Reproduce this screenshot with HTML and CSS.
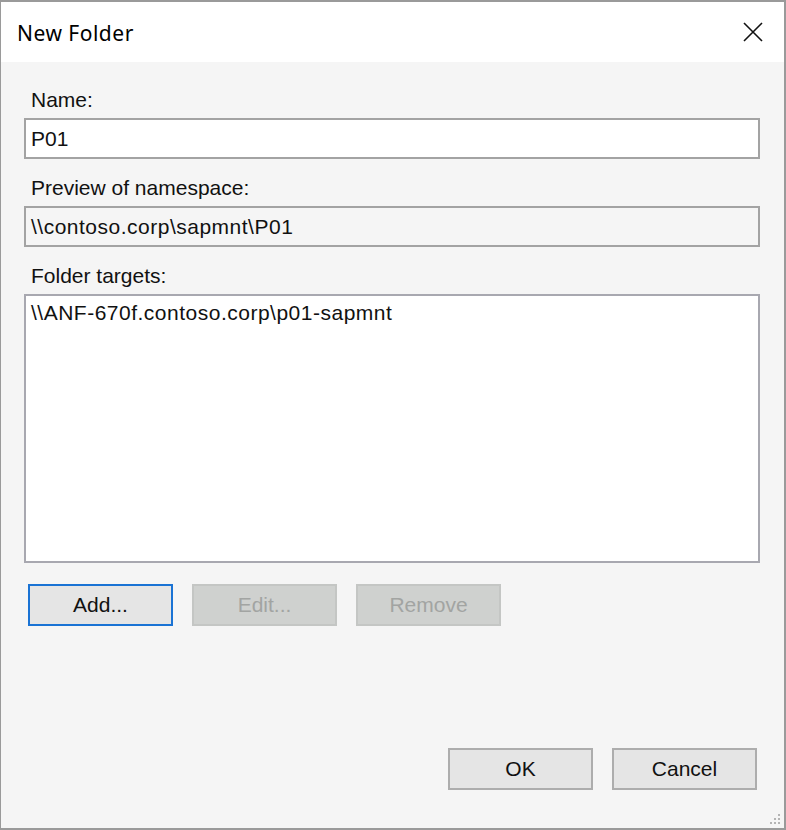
FILE: index.html
```html
<!DOCTYPE html>
<html>
<head>
<meta charset="utf-8">
<link rel="stylesheet" href="styles.css">
</head>
<body>
<div class="window">
  <div class="titlebar">
    <span class="title">New Folder</span>
    <svg class="close" width="20" height="20" viewBox="0 0 20 20"><path d="M1 1L19 19M19 1L1 19" stroke="#111" stroke-width="1.6" fill="none"/></svg>
  </div>
  <div class="content">
    <div class="label">Name:</div>
    <div class="field input">P01</div>
    <div class="label">Preview of namespace:</div>
    <div class="field readonly path">\\contoso.corp\sapmnt\P01</div>
    <div class="label">Folder targets:</div>
    <div class="list"><div class="path">\\ANF-670f.contoso.corp\p01-sapmnt</div></div>
    <div class="btnrow">
      <div class="btn focus">Add...</div>
      <div class="btn disabled">Edit...</div>
      <div class="btn disabled">Remove</div>
    </div>
    <div class="spacer"></div>
    <div class="footer">
      <div class="btn">OK</div>
      <div class="btn">Cancel</div>
    </div>
  </div>
  <svg class="grip" width="14" height="14" viewBox="0 0 14 14">
    <rect x="10" y="2" width="2" height="2" fill="#b4b4b4"/>
    <rect x="6" y="6" width="2" height="2" fill="#b4b4b4"/>
    <rect x="10" y="6" width="2" height="2" fill="#b4b4b4"/>
    <rect x="2" y="10" width="2" height="2" fill="#b4b4b4"/>
    <rect x="6" y="10" width="2" height="2" fill="#b4b4b4"/>
    <rect x="10" y="10" width="2" height="2" fill="#b4b4b4"/>
  </svg>
</div>
</body>
</html>
```
FILE: styles.css
```css
html, body {
  margin: 0;
  padding: 0;
  background: #ffffff;
}
.window {
  position: relative;
  box-sizing: border-box;
  width: 786px;
  height: 830px;
  border: 1px solid #9a9a9a;
  border-top-width: 2px;
  border-right-width: 2px;
  border-bottom-width: 2px;
  background: #f5f5f5;
  display: flex;
  flex-direction: column;
  font-family: "Liberation Sans", Arial, sans-serif;
  font-size: 21px;
  color: #111;
}
.titlebar {
  height: 60px;
  background: #ffffff;
  display: flex;
  align-items: center;
  justify-content: space-between;
  padding: 0 21px 0 16px;
  flex-shrink: 0;
}
.title {
  font-family: "Noto Sans", "Open Sans", sans-serif;
  font-size: 21px;
  letter-spacing: 0.5px;
  color: #000;
  margin-top: 1px;
}
.close {
  display: block;
}
.content {
  flex: 1;
  display: flex;
  flex-direction: column;
  padding: 26px 24px 38px 23px;
}
.label {
  padding-left: 7px;
  height: 24px;
  line-height: 24px;
  margin-bottom: 6px;
}
.field {
  box-sizing: border-box;
  height: 41px;
  border: 2px solid #a3a3a3;
  padding: 0 5px;
  line-height: 37px;
  margin-bottom: 17px;
}
.path {
  letter-spacing: 0.5px;
}
.input {
  background: #fff;
}
.readonly {
  background: #f5f5f5;
}
.list {
  box-sizing: border-box;
  height: 269px;
  border: 2px solid #a8a8b0;
  background: #fff;
  padding: 5px 5px;
  line-height: 24px;
}
.btnrow {
  display: flex;
  gap: 19px;
  padding-left: 4px;
  margin-top: 21px;
}
.btn {
  box-sizing: border-box;
  width: 145px;
  height: 42px;
  border: 2px solid #adadad;
  background: #e5e5e5;
  display: flex;
  align-items: center;
  justify-content: center;
  color: #111;
}
.btn.focus {
  border-color: #1a73d4;
}
.btn.disabled {
  background: #cfd1cf;
  border-color: #c4c6c4;
  color: #a2a4a2;
}
.spacer {
  flex: 1;
}
.footer {
  display: flex;
  justify-content: flex-end;
  gap: 19px;
  padding-right: 3px;
}
.grip {
  position: absolute;
  right: 2px;
  bottom: 2px;
}
```
